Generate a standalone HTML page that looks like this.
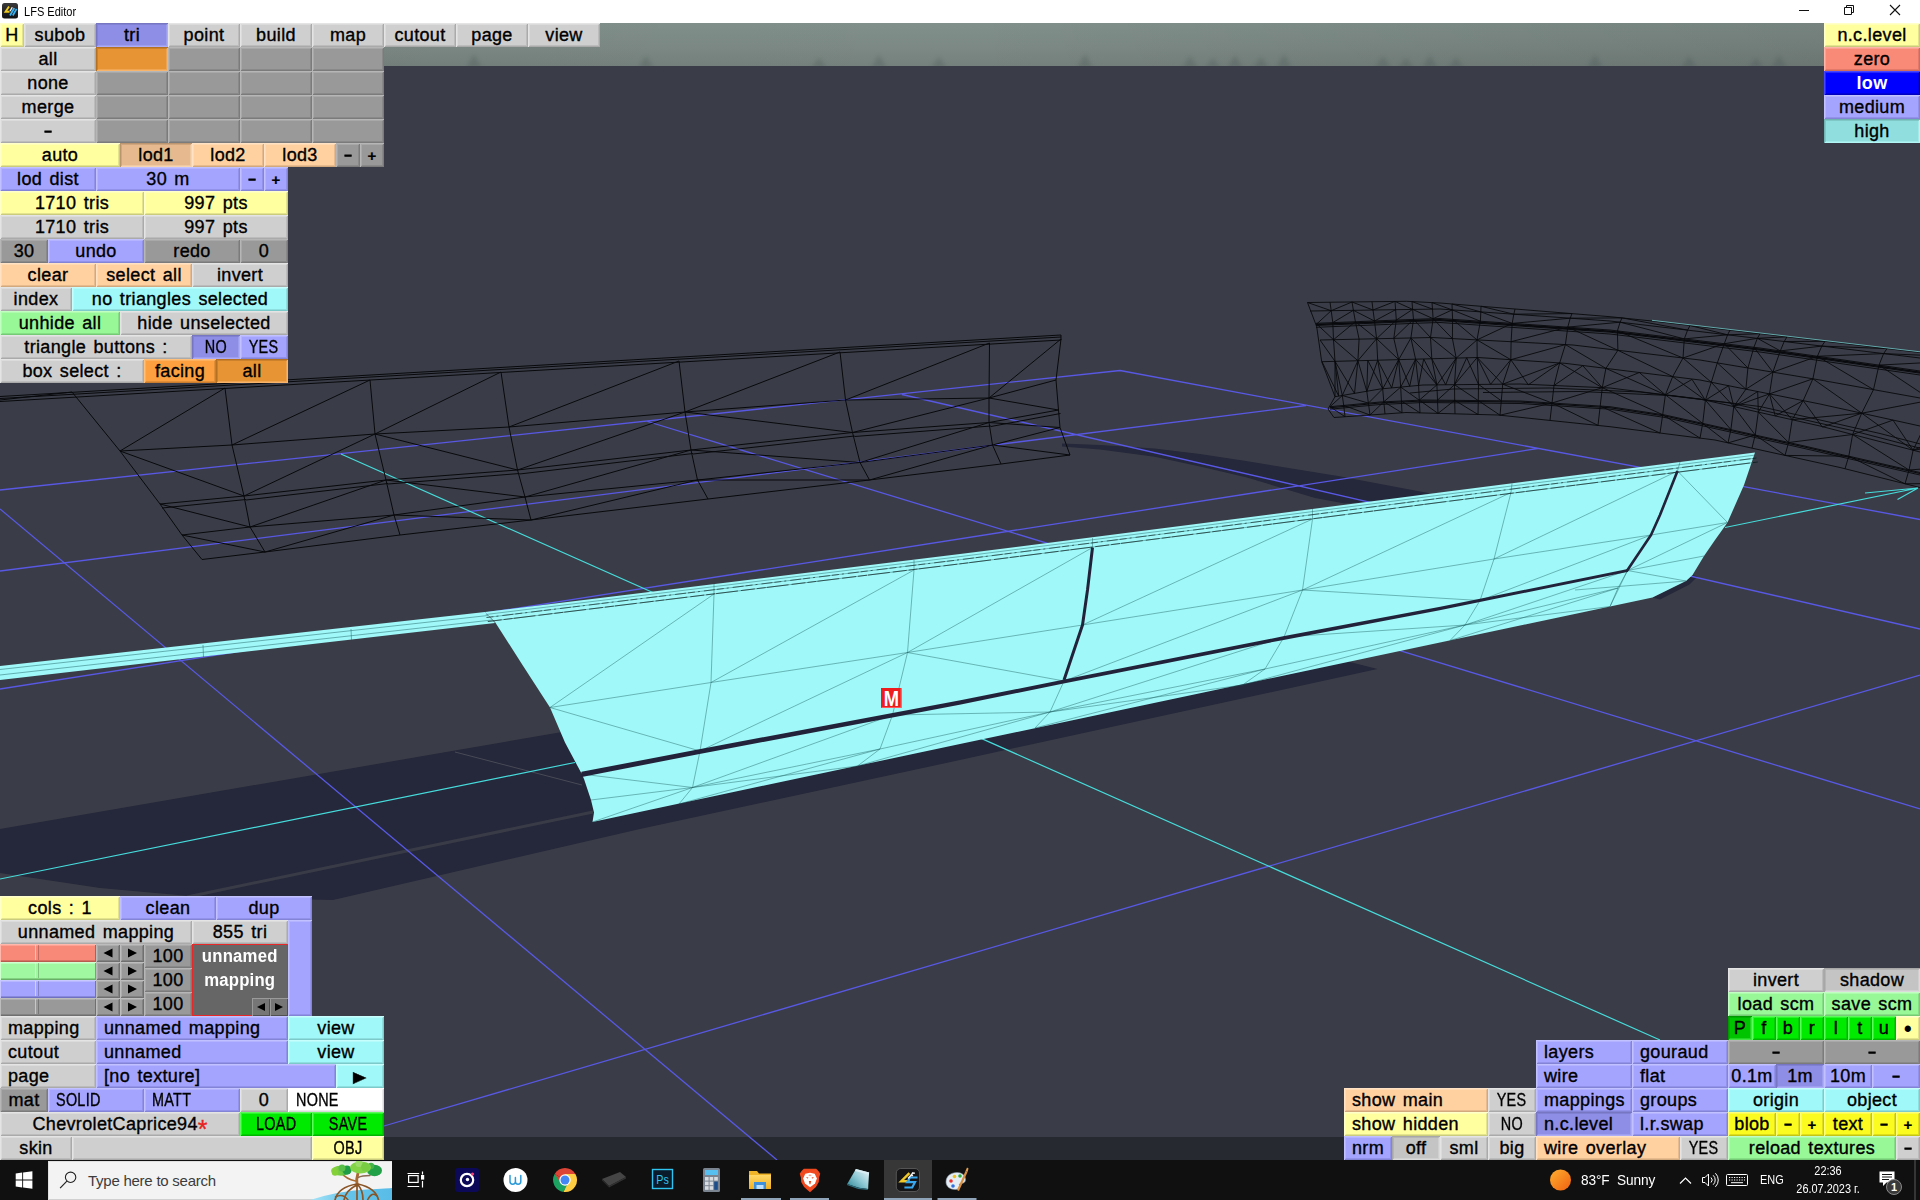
<!DOCTYPE html>
<html><head><meta charset="utf-8"><title>LFS Editor</title>
<style>
html,body{margin:0;padding:0;background:#3a3d47;}
body{width:1920px;height:1200px;position:relative;overflow:hidden;font-family:"Liberation Sans",sans-serif;}
#scene{position:absolute;left:0;top:0;}
.b{position:absolute;height:24px;box-sizing:border-box;font-size:18px;line-height:24px;letter-spacing:.35px;word-spacing:2px;color:#000;text-align:center;white-space:nowrap;overflow:hidden;-webkit-text-stroke:.35px #000;}
.b span{display:inline-block;}
.b.l{text-align:left;padding-left:8px;}
.b.uc span{transform:scaleX(.8);}
.b.l.uc span{transform-origin:0 50%;}
.b.wb{color:#fff;font-weight:bold;-webkit-text-stroke:0;}
.b.chev i{color:#e82020;font-style:normal;-webkit-text-stroke:.35px #e82020;font-size:25px;line-height:10px;display:inline-block;vertical-align:-8px;letter-spacing:0}
.b.arr span{font-size:15px;transform:scaleX(1.15);}
.b.dot span{font-size:23px;position:relative;top:.5px;-webkit-text-stroke:0}
.b.dash span{transform:scaleX(.66);-webkit-text-stroke:.9px #000;position:relative;top:-1px}
.b.plus span{font-size:15px;font-weight:bold;-webkit-text-stroke:.2px #000;position:relative;top:-.5px}
.cY{background:#ffffa0;box-shadow:inset 1px 1px 0 #ffffca,inset -1px -1px 0 #cccc7d,inset 2px 2px 0 #ffffca88,inset -2px -2px 0 #cccc7d88}
.cG{background:#cfcfcf;box-shadow:inset 1px 1px 0 #e4e4e4,inset -1px -1px 0 #aaaaaa,inset 2px 2px 0 #e4e4e488,inset -2px -2px 0 #aaaaaa88}
.cLS{background:#8e8ee6;box-shadow:inset 1px 1px 0 #7676c3,inset -1px -1px 0 #acacf8,inset 2px 2px 0 #7676c388,inset -2px -2px 0 #acacf888}
.cOS{background:#e69434;box-shadow:inset 1px 1px 0 #b47124,inset -1px -1px 0 #f8b46b,inset 2px 2px 0 #b4712488,inset -2px -2px 0 #f8b46b88}
.cD{background:#999999;box-shadow:inset 1px 1px 0 #b6b6b6,inset -1px -1px 0 #7b7b7b,inset 2px 2px 0 #b6b6b688,inset -2px -2px 0 #7b7b7b88}
.cPS{background:#e6ba8e;box-shadow:inset 1px 1px 0 #bb9570,inset -1px -1px 0 #f8d5b2,inset 2px 2px 0 #bb957088,inset -2px -2px 0 #f8d5b288}
.cP{background:#ffd0a0;box-shadow:inset 1px 1px 0 #ffe2c3,inset -1px -1px 0 #d2a87d,inset 2px 2px 0 #ffe2c388,inset -2px -2px 0 #d2a87d88}
.cL{background:#a4a4ff;box-shadow:inset 1px 1px 0 #c1c1ff,inset -1px -1px 0 #8484d7,inset 2px 2px 0 #c1c1ff88,inset -2px -2px 0 #8484d788}
.cC{background:#a0f8f8;box-shadow:inset 1px 1px 0 #c6fefe,inset -1px -1px 0 #7dcaca,inset 2px 2px 0 #c6fefe88,inset -2px -2px 0 #7dcaca88}
.cGR{background:#98f898;box-shadow:inset 1px 1px 0 #c2fec2,inset -1px -1px 0 #75ca75,inset 2px 2px 0 #c2fec288,inset -2px -2px 0 #75ca7588}
.cO{background:#fca040;box-shadow:inset 1px 1px 0 #fec07a,inset -1px -1px 0 #cb7d2f,inset 2px 2px 0 #fec07a88,inset -2px -2px 0 #cb7d2f88}
.cR{background:#f98a78;box-shadow:inset 1px 1px 0 #feb5a8,inset -1px -1px 0 #d06c5b,inset 2px 2px 0 #feb5a888,inset -2px -2px 0 #d06c5b88}
.cB{background:#0000ff;box-shadow:inset 1px 1px 0 #4848ff,inset -1px -1px 0 #0000c0,inset 2px 2px 0 #4848ff88,inset -2px -2px 0 #0000c088}
.cCS{background:#90dede;box-shadow:inset 1px 1px 0 #70b3b3,inset -1px -1px 0 #b3f6f6,inset 2px 2px 0 #70b3b388,inset -2px -2px 0 #b3f6f688}
.cW{background:#ffffff;box-shadow:inset 1px 1px 0 #ffffff,inset -1px -1px 0 #d7d7d7,inset 2px 2px 0 #ffffff88,inset -2px -2px 0 #d7d7d788}
.cBG{background:#00ea00;box-shadow:inset 1px 1px 0 #5afb5a,inset -1px -1px 0 #00b500,inset 2px 2px 0 #5afb5a88,inset -2px -2px 0 #00b50088}
.cG2{background:#c4c4c4;box-shadow:inset 1px 1px 0 #a7a7a7,inset -1px -1px 0 #dbdbdb,inset 2px 2px 0 #a7a7a788,inset -2px -2px 0 #dbdbdb88}
.cBGS{background:#00c400;box-shadow:inset 1px 1px 0 #009a00,inset -1px -1px 0 #45e445,inset 2px 2px 0 #009a0088,inset -2px -2px 0 #45e44588}
.cYB{background:#fbfb20;box-shadow:inset 1px 1px 0 #fefe7a,inset -1px -1px 0 #c5c514,inset 2px 2px 0 #fefe7a88,inset -2px -2px 0 #c5c51488}

#tb{position:absolute;left:0;top:0;width:1920px;height:23px;background:#fff;}
#tb .ttl{position:absolute;left:23.5px;top:4.5px;font-size:12px;line-height:14px;color:#000;transform:scaleX(.92);transform-origin:0 50%;}
.sl{position:absolute;left:0;width:96px;height:18px;box-sizing:border-box;}
.sl i{position:absolute;left:35px;top:1px;width:4px;height:15px;box-sizing:border-box;border-left:1px solid rgba(255,255,255,.45);border-right:1px solid rgba(0,0,0,.22);}
.ab{position:absolute;width:24px;height:18px;box-sizing:border-box;background:#999;box-shadow:inset 1px 1px 0 #bdbdbd,inset -1px -1px 0 #6f6f6f,inset 2px 2px 0 #bdbdbd88,inset -2px -2px 0 #6f6f6f88;}
.ab svg{position:absolute;left:0;top:0}
#mbox{position:absolute;left:192px;top:944px;width:96px;height:72px;box-sizing:border-box;background:#666;border:1.5px solid #e82828;color:#fff;font-weight:bold;font-size:18px;line-height:23.5px;text-align:center;letter-spacing:.2px;}
#mbox span{display:inline-block;transform:scaleX(.93);}
.sb{position:absolute;top:998px;width:18px;height:18px;box-sizing:border-box;background:#767676;box-shadow:inset 1px 1px 0 #9a9a9a,inset -1px -1px 0 #505050;}
#task{position:absolute;left:0;top:1160px;width:1920px;height:40px;background:#101010;color:#fff;}
#task svg{position:absolute;left:0;top:0}
#srch{position:absolute;left:48px;top:1px;width:344px;height:39px;background:#f3f3f3;overflow:hidden;box-sizing:border-box;box-shadow:inset 1px 1px 0 #e0e0e0,inset 0 -1px 0 #d0d0d0;}
#srch span{position:absolute;left:40px;top:11px;font-size:15px;line-height:18px;color:#3c3c3c;letter-spacing:-.25px}
.tt{position:absolute;font-size:12px;line-height:14px;color:#fff;white-space:nowrap;text-align:center;transform:scaleX(.91)}
.tt.lft{transform-origin:0 50%}

</style></head><body>
<svg id="scene" width="1920" height="1200" viewBox="0 0 1920 1200">
<defs><linearGradient id="sky" x1="0" y1="0" x2="0" y2="1"><stop offset="0" stop-color="#81908b"/><stop offset="0.55" stop-color="#7c8984"/><stop offset="1" stop-color="#75817d"/></linearGradient><linearGradient id="skyh" x1="0" y1="0" x2="1" y2="0"><stop offset="0" stop-color="#000" stop-opacity="0.02"/><stop offset="0.4" stop-color="#000" stop-opacity="0"/><stop offset="1" stop-color="#000" stop-opacity="0.09"/></linearGradient><filter id="bl" x="-20%" y="-50%" width="140%" height="200%"><feGaussianBlur stdDeviation="2.2"/></filter></defs>
<rect width="1920" height="1200" fill="#3a3d47"/>
<rect x="0" y="23" width="1920" height="43" fill="url(#sky)"/>
<rect x="384" y="23" width="1440" height="43" fill="url(#skyh)"/>
<clipPath id="csky"><rect x="384" y="23" width="1440" height="43"/></clipPath><g clip-path="url(#csky)"><path d="M466 68L474 54L482 68zM638 68L646 56L654 68zM811 68L819 58L827 68zM871 68L879 55L887 68zM931 68L939 57L947 68zM1077 68L1085 54L1093 68zM1182 68L1190 56L1198 68zM1205 68L1213 58L1221 68zM1227 68L1235 55L1243 68zM1253 68L1261 57L1269 68zM1276 68L1284 54L1292 68zM1375 68L1383 56L1391 68zM1398 68L1406 58L1414 68zM1422 68L1430 55L1438 68zM1448 68L1456 57L1464 68zM1587 68L1595 54L1603 68zM1681 68L1689 56L1697 68zM1748 68L1756 58L1764 68zM1771 68L1779 55L1787 68z" fill="#4a5654" opacity=".32" filter="url(#bl)"/></g>
<rect x="0" y="1137" width="1920" height="23" fill="#272930"/>
<polygon points="0.0,829.0 562.0,732.0 700.0,700.0 1300.0,600.0 1350.0,662.0 1377.5,669.0 960.0,760.0 640.0,829.0 333.0,900.0 200.0,897.0 100.0,888.0 0.0,873.0" fill="#25273a"/>
<path d="M187.0 897.0L593.0 812.0" stroke="#393c46" stroke-width="3"/>
<path d="M455.0 752.0L582.0 785.0" stroke="#484b56" stroke-width="1"/>
<polygon points="1062.0,443.5 1100.0,445.0 1154.6,448.6 1200.0,454.0 1246.0,461.0 1338.0,476.0 1429.5,493.3 1400.0,500.0 1344.8,503.6 1315.0,498.0 1246.0,477.3 1200.0,466.5 1154.6,456.7 1100.0,449.5 1062.0,446.5" fill="#25273a"/>
<polygon points="1652.5,597.5 1686.0,581.0 1692.5,575.0 1697.5,576.5 1689.5,584.5 1660.0,599.5" fill="#25273a"/>
<path d="M0.0 490.0L1120.0 370.5M1120.0 370.5L1920.0 519.5M0.0 571.0L1306.0 405.5M0.0 689.0L1537.5 448.5M384.0 1126.0L1920.0 675.0M0.0 509.0L777.0 1160.0M647.5 421.5L1920.0 809.0M902.0 394.5L1920.0 629.0" stroke="#5858e4" stroke-width="1.3" fill="none"/>
<path d="M341.0 454.0L1660.0 1040.0M0.0 879.0L575.0 762.5M1725.0 527.5L1918.0 488.0M1865.0 493.0L1918.0 488.0M1897.5 499.5L1918.0 488.0" stroke="#46dcdc" stroke-width="1.2" fill="none"/>
<path d="M0.0 396.5L1061.0 335.0M0.0 398.5L1061.0 337.0M0.0 401.5L1061.0 340.0M1061.0 335.0L1061.0 340.0M72.0 392.0L120.0 451.0L160.0 504.0L182.0 535.0L202.0 559.5M225.0 388.0L232.0 445.0L244.0 496.0L250.0 527.0L265.0 552.0M370.0 380.0L375.0 434.0L386.0 480.0L394.0 515.0L400.0 535.0M501.0 372.0L509.0 427.0L517.5 470.0L525.0 497.0L531.0 520.0M679.0 361.0L685.0 412.0L691.0 450.0L697.5 480.0L708.0 499.0M840.0 352.0L845.5 400.0L852.5 432.5L860.0 462.5L869.5 480.0M989.5 343.0L989.0 398.0L989.0 422.5L992.5 445.0L1001.0 464.0M1061.0 339.0L1056.0 380.0L1058.5 410.0L1060.0 427.5L1070.0 455.0M120.0 451.0L232.0 445.0M160.0 504.0L244.0 496.0M182.0 535.0L250.0 527.0M202.0 559.5L265.0 552.0M162.0 508.0L246.0 499.5M120.0 451.0L225.0 388.0M120.0 451.0L244.0 496.0M160.0 504.0L250.0 527.0M182.0 535.0L265.0 552.0M232.0 445.0L375.0 434.0M244.0 496.0L386.0 480.0M250.0 527.0L394.0 515.0M265.0 552.0L400.0 535.0M246.0 500.0L388.0 483.5M232.0 445.0L370.0 380.0M244.0 496.0L375.0 434.0M250.0 527.0L386.0 480.0M265.0 552.0L394.0 515.0M375.0 434.0L509.0 427.0M386.0 480.0L517.5 470.0M394.0 515.0L525.0 497.0M400.0 535.0L531.0 520.0M388.0 484.0L519.5 473.5M375.0 434.0L501.0 372.0M375.0 434.0L517.5 470.0M386.0 480.0L525.0 497.0M394.0 515.0L531.0 520.0M509.0 427.0L685.0 412.0M517.5 470.0L691.0 450.0M525.0 497.0L697.5 480.0M531.0 520.0L708.0 499.0M519.5 474.0L693.0 453.5M509.0 427.0L679.0 361.0M517.5 470.0L685.0 412.0M525.0 497.0L691.0 450.0M531.0 520.0L697.5 480.0M685.0 412.0L845.5 400.0M691.0 450.0L852.5 432.5M697.5 480.0L860.0 462.5M708.0 499.0L869.5 480.0M693.0 454.0L854.5 436.0M685.0 412.0L840.0 352.0M685.0 412.0L852.5 432.5M691.0 450.0L860.0 462.5M697.5 480.0L869.5 480.0M845.5 400.0L989.0 398.0M852.5 432.5L989.0 422.5M860.0 462.5L992.5 445.0M869.5 480.0L1001.0 464.0M854.5 436.5L991.0 426.0M845.5 400.0L989.5 343.0M852.5 432.5L989.0 398.0M860.0 462.5L989.0 422.5M869.5 480.0L992.5 445.0M989.0 398.0L1056.0 380.0M989.0 422.5L1058.5 410.0M992.5 445.0L1060.0 427.5M1001.0 464.0L1070.0 455.0M991.0 426.5L1060.5 413.5M989.0 398.0L1061.0 339.0M989.0 398.0L1058.5 410.0M989.0 422.5L1060.0 427.5M992.5 445.0L1070.0 455.0M0.0 400.0L72.0 392.0" stroke="#08090c" stroke-width="1" fill="none" stroke-linejoin="round"/>
<clipPath id="cw2"><rect x="1300" y="290" width="620" height="230"/></clipPath>
<path clip-path="url(#cw2)" d="M1307.5 302.5L1406.7 301.3L1440.0 303.0L1515.0 309.0L1610.0 316.7L1652.0 321.0L1780.0 336.0L1920.0 352.5L2000.0 363.0M1310.0 311.0L1440.0 309.0L1610.0 321.0L1780.0 341.0L1920.0 358.0L2000.0 369.0M1316.0 323.3L1423.0 319.0L1440.0 318.5L1610.0 330.0L1760.0 348.0L1920.0 371.0L2000.0 384.0M1320.0 340.0L1432.0 337.5L1573.0 345.0L1700.0 360.0L1820.0 380.0L1920.0 398.0L2000.0 412.0M1322.0 361.7L1478.0 357.5L1565.0 363.3L1700.0 380.0L1820.0 404.0L1920.0 426.0L2000.0 444.0M1335.0 396.7L1380.0 389.0L1423.0 385.0L1520.0 384.0L1610.0 388.0L1700.0 399.0L1820.0 426.0L1920.0 452.0L2000.0 474.0M1330.0 406.7L1380.0 402.0L1423.0 400.0L1520.0 401.0L1610.0 406.7L1665.0 415.0L1800.0 445.0L1920.0 472.5L2000.0 492.0M1334.0 417.5L1406.0 412.5L1498.0 415.0L1610.0 426.7L1715.0 440.0L1840.0 467.5L1920.0 487.5L2000.0 508.0M1316.0 325.5L1423.0 321.2L1440.0 320.7L1610.0 332.2L1760.0 350.2L1920.0 373.2L2000.0 386.2M1316.0 327.3L1423.0 323.0L1440.0 322.5L1610.0 334.0L1760.0 352.0L1920.0 375.0L2000.0 388.0M1330.0 409.2L1380.0 404.5L1423.0 402.5L1520.0 403.5L1610.0 409.2L1665.0 417.5L1800.0 447.5L1920.0 475.0L2000.0 494.5M1410.0 393.0L1453.0 389.0L1550.0 388.0L1640.0 392.0L1730.0 403.0L1850.0 430.0L1950.0 456.0L2030.0 478.0M1483.0 392.5L1580.0 391.5L1670.0 395.5L1760.0 406.5L1880.0 433.5L1980.0 459.5L2060.0 481.5M1307.5 302.5L1316.7 326.7L1321.7 361.7L1335.0 396.7L1328.0 409.0L1334.0 417.5M1330.0 302.2L1331.2 310.7L1332.8 322.6L1333.5 339.7L1335.0 361.3L1342.3 395.5L1343.7 405.4L1345.0 416.7M1307.5 302.5L1331.2 310.7M1316.7 324.0L1331.2 310.7M1316.7 324.0L1333.5 339.7M1320.0 340.0L1335.0 361.3M1335.0 396.7L1335.0 361.3M1330.0 406.7L1342.3 395.5M1330.0 406.7L1345.0 416.7M1338.7 396.1L1322.0 361.7M1338.7 396.1L1335.0 361.3M1352.0 302.0L1353.4 310.3L1355.4 321.7L1359.1 339.1L1357.9 360.7L1366.8 391.3L1368.4 403.1L1370.0 415.0M1331.2 310.7L1352.0 302.0M1332.8 322.6L1353.4 310.3M1333.5 339.7L1355.4 321.7M1333.5 339.7L1357.9 360.7M1342.3 395.5L1357.9 360.7M1342.3 395.5L1368.4 403.1M1343.7 405.4L1370.0 415.0M1354.5 393.4L1335.0 361.3M1354.5 393.4L1357.9 360.7M1372.0 301.7L1373.0 310.0L1374.5 321.0L1376.6 338.7L1377.7 360.2L1382.7 388.8L1383.8 401.8L1385.0 414.0M1352.0 302.0L1373.0 310.0M1353.4 310.3L1374.5 321.0M1355.4 321.7L1376.6 338.7M1357.9 360.7L1376.6 338.7M1366.8 391.3L1377.7 360.2M1368.4 403.1L1382.7 388.8M1370.0 415.0L1383.8 401.8M1367.8 360.5L1366.8 391.3M1367.8 360.5L1382.7 388.8M1395.0 301.4L1395.6 309.7L1396.3 320.1L1393.8 338.4L1398.7 359.6L1400.7 387.1L1401.4 401.0L1402.0 412.8M1373.0 310.0L1395.0 301.4M1374.5 321.0L1395.6 309.7M1376.6 338.7L1396.3 320.1M1376.6 338.7L1398.7 359.6M1382.7 388.8L1398.7 359.6M1383.8 401.8L1400.7 387.1M1383.8 401.8L1402.0 412.8M1391.7 387.9L1377.7 360.2M1391.7 387.9L1398.7 359.6M1412.0 301.6L1412.6 309.4L1413.5 319.4L1410.9 338.0L1415.6 359.2L1418.6 385.4L1419.3 400.2L1420.0 412.9M1395.0 301.4L1412.6 309.4M1396.3 320.1L1412.6 309.4M1393.8 338.4L1413.5 319.4M1398.7 359.6L1410.9 338.0M1400.7 387.1L1415.6 359.2M1400.7 387.1L1419.3 400.2M1401.4 401.0L1420.0 412.9M1409.7 386.2L1398.7 359.6M1409.7 386.2L1415.6 359.2M1432.0 302.6L1432.5 309.1L1433.1 318.7L1430.5 337.5L1431.8 358.7L1436.9 384.9L1437.5 400.1L1438.0 413.4M1412.0 301.6L1432.5 309.1M1412.6 309.4L1433.1 318.7M1413.5 319.4L1430.5 337.5M1410.9 338.0L1431.8 358.7M1415.6 359.2L1436.9 384.9M1419.3 400.2L1436.9 384.9M1419.3 400.2L1438.0 413.4M1423.7 359.0L1418.6 385.4M1423.7 359.0L1436.9 384.9M1452.0 304.0L1452.2 309.9L1452.6 319.4L1452.4 338.6L1456.2 358.1L1454.5 384.7L1454.7 400.3L1455.0 413.8M1432.0 302.6L1452.2 309.9M1433.1 318.7L1452.2 309.9M1433.1 318.7L1452.4 338.6M1430.5 337.5L1456.2 358.1M1436.9 384.9L1456.2 358.1M1437.5 400.1L1454.5 384.7M1438.0 413.4L1454.7 400.3M1445.7 384.8L1431.8 358.7M1445.7 384.8L1456.2 358.1M1481.0 306.3L1480.8 311.9L1480.4 321.2L1477.0 339.9L1477.2 357.5L1478.5 384.4L1478.3 400.6L1478.0 414.5M1452.0 304.0L1480.8 311.9M1452.2 309.9L1480.4 321.2M1452.6 319.4L1477.0 339.9M1456.2 358.1L1477.0 339.9M1454.5 384.7L1477.2 357.5M1454.5 384.7L1478.3 400.6M1454.7 400.3L1478.0 414.5M1466.7 357.8L1454.5 384.7M1466.7 357.8L1478.5 384.4M1515.0 309.0L1513.8 314.2L1512.2 323.4L1511.1 341.7L1510.8 359.7L1502.7 384.2L1501.3 400.8L1500.0 415.2M1481.0 306.3L1513.8 314.2M1480.8 311.9L1512.2 323.4M1477.0 339.9L1512.2 323.4M1477.0 339.9L1510.8 359.7M1477.2 357.5L1502.7 384.2M1478.5 384.4L1501.3 400.8M1478.3 400.6L1500.0 415.2M1490.6 384.3L1477.2 357.5M1490.6 384.3L1510.8 359.7M1572.0 313.6L1570.2 318.2L1567.8 327.1L1565.4 344.6L1559.7 362.9L1554.0 385.5L1552.0 403.0L1550.0 420.4M1513.8 314.2L1572.0 313.6M1512.2 323.4L1570.2 318.2M1511.1 341.7L1567.8 327.1M1510.8 359.7L1565.4 344.6M1502.7 384.2L1559.7 362.9M1502.7 384.2L1552.0 403.0M1500.0 415.2L1552.0 403.0M1528.3 384.8L1510.8 359.7M1528.3 384.8L1559.7 362.9M1622.0 317.9L1620.1 322.2L1617.4 330.9L1617.9 350.3L1605.9 368.4L1602.3 387.7L1600.2 406.1L1598.0 425.4M1570.2 318.2L1622.0 317.9M1567.8 327.1L1620.1 322.2M1567.8 327.1L1617.9 350.3M1565.4 344.6L1605.9 368.4M1559.7 362.9L1602.3 387.7M1552.0 403.0L1602.3 387.7M1552.0 403.0L1598.0 425.4M1582.8 365.7L1554.0 385.5M1582.8 365.7L1602.3 387.7M1690.0 325.5L1687.6 330.1L1684.3 338.9L1683.0 358.0L1672.7 376.6L1665.4 394.8L1662.7 414.7L1660.0 433.0M1622.0 317.9L1687.6 330.1M1620.1 322.2L1684.3 338.9M1617.4 330.9L1683.0 358.0M1617.9 350.3L1672.7 376.6M1605.9 368.4L1665.4 394.8M1602.3 387.7L1662.7 414.7M1600.2 406.1L1660.0 433.0M1639.3 372.5L1602.3 387.7M1639.3 372.5L1665.4 394.8M1730.0 330.1L1727.6 334.8L1724.3 343.7L1717.3 362.9L1711.3 382.3L1705.4 400.2L1702.7 423.4L1700.0 438.1M1690.0 325.5L1727.6 334.8M1684.3 338.9L1727.6 334.8M1683.0 358.0L1724.3 343.7M1683.0 358.0L1711.3 382.3M1672.7 376.6L1705.4 400.2M1665.4 394.8L1702.7 423.4M1662.7 414.7L1700.0 438.1M1692.0 379.4L1665.4 394.8M1692.0 379.4L1705.4 400.2M1760.0 333.7L1757.4 338.3L1753.9 347.3L1747.9 368.0L1745.9 389.2L1733.8 406.6L1730.9 429.6L1728.0 442.9M1727.6 334.8L1760.0 333.7M1724.3 343.7L1757.4 338.3M1724.3 343.7L1747.9 368.0M1717.3 362.9L1745.9 389.2M1711.3 382.3L1733.8 406.6M1705.4 400.2L1730.9 429.6M1702.7 423.4L1728.0 442.9M1728.6 385.7L1705.4 400.2M1728.6 385.7L1733.8 406.6M1787.0 336.8L1784.2 341.5L1780.3 350.9L1772.9 372.1L1769.5 393.9L1758.3 412.1L1755.2 435.0L1752.0 448.1M1757.4 338.3L1787.0 336.8M1757.4 338.3L1780.3 350.9M1753.9 347.3L1772.9 372.1M1745.9 389.2L1772.9 372.1M1733.8 406.6L1769.5 393.9M1733.8 406.6L1755.2 435.0M1728.0 442.9L1755.2 435.0M1757.7 391.5L1733.8 406.6M1757.7 391.5L1758.3 412.1M1825.0 341.3L1821.8 346.1L1817.4 356.3L1812.9 378.8L1803.2 400.6L1792.2 419.7L1788.6 442.5L1785.0 455.4M1784.2 341.5L1825.0 341.3M1780.3 350.9L1821.8 346.1M1772.9 372.1L1817.4 356.3M1769.5 393.9L1812.9 378.8M1769.5 393.9L1792.2 419.7M1758.3 412.1L1788.6 442.5M1755.2 435.0L1785.0 455.4M1775.2 415.9L1769.5 393.9M1775.2 415.9L1803.2 400.6M1887.0 348.6L1883.6 353.6L1879.0 365.1L1873.5 389.6L1861.7 413.2L1852.6 434.5L1848.8 456.2L1845.0 468.8M1821.8 346.1L1887.0 348.6M1817.4 356.3L1883.6 353.6M1817.4 356.3L1873.5 389.6M1812.9 378.8L1861.7 413.2M1792.2 419.7L1861.7 413.2M1788.6 442.5L1852.6 434.5M1785.0 455.4L1848.8 456.2M1822.4 427.1L1803.2 400.6M1822.4 427.1L1861.7 413.2M1950.0 356.4L1946.4 361.6L1941.5 374.5L1931.6 400.0L1924.2 427.0L1913.1 450.2L1909.0 470.0L1905.0 483.8M1883.6 353.6L1950.0 356.4M1879.0 365.1L1946.4 361.6M1879.0 365.1L1931.6 400.0M1861.7 413.2L1931.6 400.0M1861.7 413.2L1913.1 450.2M1852.6 434.5L1909.0 470.0M1848.8 456.2L1905.0 483.8M1893.0 420.1L1852.6 434.5M1893.0 420.1L1913.1 450.2M2010.0 364.3L2006.0 369.8L2000.5 384.1L1994.9 411.1L1983.4 440.3L1969.0 465.5L1964.5 483.3L1960.0 497.8M1950.0 356.4L2006.0 369.8M1941.5 374.5L2006.0 369.8M1931.6 400.0L2000.5 384.1M1931.6 400.0L1983.4 440.3M1913.1 450.2L1983.4 440.3M1909.0 470.0L1969.0 465.5M1905.0 483.8L1964.5 483.3M1953.8 433.6L1913.1 450.2M1953.8 433.6L1969.0 465.5" stroke="#08090c" stroke-width=".9" fill="none" stroke-linejoin="round"/>
<path clip-path="url(#cw2)" d="M1316.0 324.5L1423.0 320.2L1440.0 319.7L1610.0 331.2L1760.0 349.2L1920.0 372.2L2000.0 385.2" stroke="#08090c" stroke-width="1.6" fill="none"/>
<path clip-path="url(#cw2)" d="M1330.0 407.7L1380.0 403.0L1423.0 401.0L1520.0 402.0L1610.0 407.7L1665.0 416.0L1800.0 446.0L1920.0 473.5L2000.0 493.0" stroke="#08090c" stroke-width="1.1" fill="none"/>
<path d="M1652.0 320.3L1780.0 335.3L1920.0 351.8" stroke="#7adcdc" stroke-width="1" fill="none" opacity=".7"/>
<polygon points="0.0,666.0 485.0,612.0 495.0,623.0 0.0,680.0" fill="#a0f8f8"/>
<path d="M0.0 669.5L488.0 615.5M0.0 675.0L492.0 620.0M203.0 645.0L203.5 657.0M351.0 629.0L351.5 640.0" stroke="#1c5c60" stroke-width=".6" fill="none" opacity=".8"/>
<polygon points="485.0,612.0 960.0,554.0 1200.0,523.5 1440.0,492.5 1755.0,452.5 1744.0,485.0 1727.5,522.5 1715.0,540.0 1704.0,556.0 1692.5,575.0 1686.0,581.0 1652.5,597.5 1440.0,642.5 960.0,744.0 592.5,822.0 594.0,812.5 591.0,800.0 584.0,779.0 581.0,772.5 565.0,742.5 550.0,707.5 522.5,665.0 495.0,622.0" fill="#a0f8f8"/>
<path d="M485.8 614.5L960.8 556.5L1200.8 526.0L1440.8 495.0L1755.8 455.0M486.6 617.5L961.6 559.5L1201.7 529.0L1441.7 498.0L1756.7 458.0M487.9 621.5L962.9 563.5L1202.8 533.0L1442.8 502.0L1757.8 462.0M714.0 584.0L714.0 594.0L711.0 682.5L700.0 751.0L692.5 787.5L679.0 804.0M914.0 560.0L914.0 570.0L907.5 652.5L892.5 715.0L880.0 749.0L857.5 766.0M1092.5 538.0L1092.5 547.5L1082.5 625.0L1064.0 681.0L1050.0 712.0L1035.0 728.0M1312.5 509.0L1312.5 519.0L1302.5 590.0L1284.0 637.0L1265.0 669.0L1242.5 685.0M1512.0 483.5L1511.0 492.5L1494.0 559.0L1480.0 600.5L1465.0 625.0L1450.0 640.5M1680.0 462.0L1677.5 471.0L1651.0 535.0L1627.5 570.5L1618.0 588.0L1610.0 606.5M1677.5 471.0L1727.5 522.5M1651.0 535.0L1727.5 522.5M1627.5 570.5L1727.5 522.5M1627.5 570.5L1704.0 556.0M1627.5 570.5L1686.0 581.0M1610.0 606.5L1627.5 570.5M1575.0 590.0L1686.0 581.0M550.0 707.5L711.0 682.5M591.0 800.0L692.5 787.5M550.0 707.5L714.0 594.0M550.0 707.5L700.0 751.0M592.5 822.0L692.5 787.5M581.0 774.0L692.5 787.5M711.0 682.5L907.5 652.5M692.5 787.5L880.0 749.0M711.0 682.5L914.0 570.0M700.0 751.0L907.5 652.5M692.5 787.5L892.5 715.0M679.0 804.0L880.0 749.0M692.5 787.5L857.5 766.0M907.5 652.5L1082.5 625.0M880.0 749.0L1050.0 712.0M907.5 652.5L1092.5 547.5M907.5 652.5L1064.0 681.0M857.5 766.0L1050.0 712.0M892.5 715.0L1050.0 712.0M1082.5 625.0L1302.5 590.0M1050.0 712.0L1265.0 669.0M1082.5 625.0L1312.5 519.0M1064.0 681.0L1302.5 590.0M1050.0 712.0L1284.0 637.0M1035.0 728.0L1265.0 669.0M1050.0 712.0L1242.5 685.0M1302.5 590.0L1494.0 559.0M1265.0 669.0L1465.0 625.0M1302.5 590.0L1511.0 492.5M1302.5 590.0L1480.0 600.5M1242.5 685.0L1465.0 625.0M1284.0 637.0L1465.0 625.0M1494.0 559.0L1651.0 535.0M1465.0 625.0L1618.0 588.0M1494.0 559.0L1677.5 471.0M1480.0 600.5L1651.0 535.0M1465.0 625.0L1627.5 570.5M1450.0 640.5L1618.0 588.0M1465.0 625.0L1610.0 606.5" stroke="#1c5c60" stroke-width=".7" fill="none" opacity=".62"/>
<path d="M486.5 617.5L961.5 559.5L1201.5 529.0L1441.5 498.0L1756.5 458.0" stroke="#000" stroke-width=".9" fill="none" stroke-dasharray="7 3 2 4 11 2" opacity=".55"/>
<path d="M487.8 621.5L962.8 563.5L1202.8 533.0L1442.8 502.0L1757.8 462.0" stroke="#000" stroke-width=".9" fill="none" stroke-dasharray="14 2 9 1 22 3" opacity=".62"/>
<polygon points="581.5,771.8 700.5,749.0 960.4,700.3 1064.4,679.4 1284.4,636.1 1440.3,606.8 1627.8,569.0 1627.2,572.0 1439.7,610.2 1283.6,639.9 1063.6,683.6 959.6,704.7 699.5,754.0 580.5,777.2" fill="#22233a"/>
<path d="M1626.5 571.5L1651.0 535.0L1660.0 515.0L1677.5 471.0" stroke="#22233a" stroke-width="2.600" fill="none" stroke-linejoin="round"/>
<path d="M1092.5 547.5L1087.5 590.0L1082.5 625.0L1064.0 680.0" stroke="#22233a" stroke-width="3" fill="none" stroke-linejoin="round"/>
<rect x="881" y="688" width="20.500" height="20" fill="#ee1c1c"/><path d="M881.500 707.500H901V688.500" fill="none" stroke="#ff5858" stroke-width="1"/>
<text x="891.300" y="706" text-anchor="middle" font-family="Liberation Sans, sans-serif" font-weight="bold" font-size="21.500" fill="#fff" textLength="15.300" lengthAdjust="spacingAndGlyphs">M</text>
</svg>
<div id="tb">
<svg width="1920" height="23" viewBox="0 0 1920 23" style="position:absolute;left:0;top:0">
<defs><linearGradient id="ig" x1="0" y1="0" x2="0" y2="1"><stop offset="0" stop-color="#3a3a3c"/><stop offset="1" stop-color="#111113"/></linearGradient></defs>
<rect x="2" y="3" width="16" height="15.500" rx="2.500" fill="url(#ig)"/>
<path d="M9 6.500L5.500 11.800h4" fill="none" stroke="#f0cc20" stroke-width="1.900"/>
<path d="M14.300 8L10 15.500M16.600 8.800L12.800 15.500" fill="none" stroke="#38b4f4" stroke-width="1.700"/>
<path d="M12.300 7.200l-2.300 4" stroke="#f4f4f4" stroke-width="1.300"/>
<path d="M1799 10.5h10" stroke="#111" stroke-width="1"/>
<path d="M1844.5 7.5h7v7h-7zM1846.500 7.5v-2h7v7h-2" fill="none" stroke="#111" stroke-width="1"/>
<path d="M1890 5l10 10M1900 5l-10 10" stroke="#111" stroke-width="1.1"/>
</svg>
<span class="ttl">LFS Editor</span></div>
<div class="b cY" style="left:0px;top:23px;width:24px;"><span>H</span></div>
<div class="b cG" style="left:24px;top:23px;width:72px;"><span>subob</span></div>
<div class="b cLS" style="left:96px;top:23px;width:72px;"><span>tri</span></div>
<div class="b cG" style="left:168px;top:23px;width:72px;"><span>point</span></div>
<div class="b cG" style="left:240px;top:23px;width:72px;"><span>build</span></div>
<div class="b cG" style="left:312px;top:23px;width:72px;"><span>map</span></div>
<div class="b cG" style="left:384px;top:23px;width:72px;"><span>cutout</span></div>
<div class="b cG" style="left:456px;top:23px;width:72px;"><span>page</span></div>
<div class="b cG" style="left:528px;top:23px;width:72px;"><span>view</span></div>
<div class="b cG" style="left:0px;top:47px;width:96px;"><span>all</span></div>
<div class="b cOS" style="left:96px;top:47px;width:72px;"></div>
<div class="b cD" style="left:168px;top:47px;width:72px;"></div>
<div class="b cD" style="left:240px;top:47px;width:72px;"></div>
<div class="b cD" style="left:312px;top:47px;width:72px;"></div>
<div class="b cG" style="left:0px;top:71px;width:96px;"><span>none</span></div>
<div class="b cD" style="left:96px;top:71px;width:72px;"></div>
<div class="b cD" style="left:168px;top:71px;width:72px;"></div>
<div class="b cD" style="left:240px;top:71px;width:72px;"></div>
<div class="b cD" style="left:312px;top:71px;width:72px;"></div>
<div class="b cG" style="left:0px;top:95px;width:96px;"><span>merge</span></div>
<div class="b cD" style="left:96px;top:95px;width:72px;"></div>
<div class="b cD" style="left:168px;top:95px;width:72px;"></div>
<div class="b cD" style="left:240px;top:95px;width:72px;"></div>
<div class="b cD" style="left:312px;top:95px;width:72px;"></div>
<div class="b cG dash" style="left:0px;top:119px;width:96px;"><span>–</span></div>
<div class="b cD" style="left:96px;top:119px;width:72px;"></div>
<div class="b cD" style="left:168px;top:119px;width:72px;"></div>
<div class="b cD" style="left:240px;top:119px;width:72px;"></div>
<div class="b cD" style="left:312px;top:119px;width:72px;"></div>
<div class="b cY" style="left:0px;top:143px;width:120px;"><span>auto</span></div>
<div class="b cPS" style="left:120px;top:143px;width:72px;"><span>lod1</span></div>
<div class="b cP" style="left:192px;top:143px;width:72px;"><span>lod2</span></div>
<div class="b cP" style="left:264px;top:143px;width:72px;"><span>lod3</span></div>
<div class="b cD dash" style="left:336px;top:143px;width:24px;"><span>–</span></div>
<div class="b cD plus" style="left:360px;top:143px;width:24px;"><span>+</span></div>
<div class="b cL" style="left:0px;top:167px;width:96px;"><span>lod dist</span></div>
<div class="b cL" style="left:96px;top:167px;width:144px;"><span>30 m</span></div>
<div class="b cL dash" style="left:240px;top:167px;width:24px;"><span>–</span></div>
<div class="b cL plus" style="left:264px;top:167px;width:24px;"><span>+</span></div>
<div class="b cY" style="left:0px;top:191px;width:144px;"><span>1710 tris</span></div>
<div class="b cY" style="left:144px;top:191px;width:144px;"><span>997 pts</span></div>
<div class="b cG" style="left:0px;top:215px;width:144px;"><span>1710 tris</span></div>
<div class="b cG" style="left:144px;top:215px;width:144px;"><span>997 pts</span></div>
<div class="b cD" style="left:0px;top:239px;width:48px;"><span>30</span></div>
<div class="b cL" style="left:48px;top:239px;width:96px;"><span>undo</span></div>
<div class="b cD" style="left:144px;top:239px;width:96px;"><span>redo</span></div>
<div class="b cD" style="left:240px;top:239px;width:48px;"><span>0</span></div>
<div class="b cP" style="left:0px;top:263px;width:96px;"><span>clear</span></div>
<div class="b cP" style="left:96px;top:263px;width:96px;"><span>select all</span></div>
<div class="b cG" style="left:192px;top:263px;width:96px;"><span>invert</span></div>
<div class="b cG" style="left:0px;top:287px;width:72px;"><span>index</span></div>
<div class="b cC" style="left:72px;top:287px;width:216px;"><span>no triangles selected</span></div>
<div class="b cGR" style="left:0px;top:311px;width:120px;"><span>unhide all</span></div>
<div class="b cG" style="left:120px;top:311px;width:168px;"><span>hide unselected</span></div>
<div class="b cG" style="left:0px;top:335px;width:192px;"><span>triangle buttons :</span></div>
<div class="b cLS uc" style="left:192px;top:335px;width:48px;"><span>NO</span></div>
<div class="b cL uc" style="left:240px;top:335px;width:48px;"><span>YES</span></div>
<div class="b cG" style="left:0px;top:359px;width:144px;"><span>box select :</span></div>
<div class="b cO" style="left:144px;top:359px;width:72px;"><span>facing</span></div>
<div class="b cOS" style="left:216px;top:359px;width:72px;"><span>all</span></div>
<div class="b cY" style="left:1824px;top:23px;width:96px;"><span>n.c.level</span></div>
<div class="b cR" style="left:1824px;top:47px;width:96px;"><span>zero</span></div>
<div class="b cB wb" style="left:1824px;top:71px;width:96px;"><span>low</span></div>
<div class="b cL" style="left:1824px;top:95px;width:96px;"><span>medium</span></div>
<div class="b cCS" style="left:1824px;top:119px;width:96px;"><span>high</span></div>
<div class="b cY" style="left:0px;top:896px;width:120px;"><span>cols : 1</span></div>
<div class="b cL" style="left:120px;top:896px;width:96px;"><span>clean</span></div>
<div class="b cL" style="left:216px;top:896px;width:96px;"><span>dup</span></div>
<div class="b cG" style="left:0px;top:920px;width:192px;"><span>unnamed mapping</span></div>
<div class="b cG" style="left:192px;top:920px;width:96px;"><span>855 tri</span></div>
<div class="b cL" style="left:288px;top:920px;width:24px;height:96px;"></div>
<div class="b cG l" style="left:0px;top:1016px;width:96px;"><span>mapping</span></div>
<div class="b cL l" style="left:96px;top:1016px;width:192px;"><span>unnamed mapping</span></div>
<div class="b cC" style="left:288px;top:1016px;width:96px;"><span>view</span></div>
<div class="b cG l" style="left:0px;top:1040px;width:96px;"><span>cutout</span></div>
<div class="b cL l" style="left:96px;top:1040px;width:192px;"><span>unnamed</span></div>
<div class="b cC" style="left:288px;top:1040px;width:96px;"><span>view</span></div>
<div class="b cG l" style="left:0px;top:1064px;width:96px;"><span>page</span></div>
<div class="b cL l" style="left:96px;top:1064px;width:240px;"><span>[no texture]</span></div>
<div class="b cC arr" style="left:336px;top:1064px;width:48px;"><span>▶</span></div>
<div class="b cD" style="left:0px;top:1088px;width:48px;"><span>mat</span></div>
<div class="b cL l uc" style="left:48px;top:1088px;width:96px;"><span>SOLID</span></div>
<div class="b cL l uc" style="left:144px;top:1088px;width:96px;"><span>MATT</span></div>
<div class="b cG" style="left:240px;top:1088px;width:48px;"><span>0</span></div>
<div class="b cW l uc" style="left:288px;top:1088px;width:96px;"><span>NONE</span></div>
<div class="b cG chev" style="left:0px;top:1112px;width:240px;"><span>ChevroletCaprice94<i>*</i></span></div>
<div class="b cBG uc" style="left:240px;top:1112px;width:72px;"><span>LOAD</span></div>
<div class="b cBG uc" style="left:312px;top:1112px;width:72px;"><span>SAVE</span></div>
<div class="b cG" style="left:0px;top:1136px;width:72px;"><span>skin</span></div>
<div class="b cG" style="left:72px;top:1136px;width:240px;"></div>
<div class="b cY uc" style="left:312px;top:1136px;width:72px;"><span>OBJ</span></div>
<div class="b cG" style="left:1728px;top:968px;width:96px;"><span>invert</span></div>
<div class="b cG2" style="left:1824px;top:968px;width:96px;"><span>shadow</span></div>
<div class="b cGR" style="left:1728px;top:992px;width:96px;"><span>load scm</span></div>
<div class="b cGR" style="left:1824px;top:992px;width:96px;"><span>save scm</span></div>
<div class="b cBGS" style="left:1728px;top:1016px;width:24px;"><span>P</span></div>
<div class="b cBG" style="left:1752px;top:1016px;width:24px;"><span>f</span></div>
<div class="b cBG" style="left:1776px;top:1016px;width:24px;"><span>b</span></div>
<div class="b cBG" style="left:1800px;top:1016px;width:24px;"><span>r</span></div>
<div class="b cBG" style="left:1824px;top:1016px;width:24px;"><span>l</span></div>
<div class="b cBG" style="left:1848px;top:1016px;width:24px;"><span>t</span></div>
<div class="b cBG" style="left:1872px;top:1016px;width:24px;"><span>u</span></div>
<div class="b cY dot" style="left:1896px;top:1016px;width:24px;"><span>•</span></div>
<div class="b cL l" style="left:1536px;top:1040px;width:96px;"><span>layers</span></div>
<div class="b cL l" style="left:1632px;top:1040px;width:96px;"><span>gouraud</span></div>
<div class="b cD dash" style="left:1728px;top:1040px;width:96px;"><span>–</span></div>
<div class="b cD dash" style="left:1824px;top:1040px;width:96px;"><span>–</span></div>
<div class="b cL l" style="left:1536px;top:1064px;width:96px;"><span>wire</span></div>
<div class="b cL l" style="left:1632px;top:1064px;width:96px;"><span>flat</span></div>
<div class="b cL" style="left:1728px;top:1064px;width:48px;"><span>0.1m</span></div>
<div class="b cLS" style="left:1776px;top:1064px;width:48px;"><span>1m</span></div>
<div class="b cL" style="left:1824px;top:1064px;width:48px;"><span>10m</span></div>
<div class="b cL dash" style="left:1872px;top:1064px;width:48px;"><span>–</span></div>
<div class="b cP l" style="left:1344px;top:1088px;width:144px;"><span>show main</span></div>
<div class="b cG uc" style="left:1488px;top:1088px;width:48px;"><span>YES</span></div>
<div class="b cL l" style="left:1536px;top:1088px;width:96px;"><span>mappings</span></div>
<div class="b cL l" style="left:1632px;top:1088px;width:96px;"><span>groups</span></div>
<div class="b cC" style="left:1728px;top:1088px;width:96px;"><span>origin</span></div>
<div class="b cC" style="left:1824px;top:1088px;width:96px;"><span>object</span></div>
<div class="b cY l" style="left:1344px;top:1112px;width:144px;"><span>show hidden</span></div>
<div class="b cG uc" style="left:1488px;top:1112px;width:48px;"><span>NO</span></div>
<div class="b cLS l" style="left:1536px;top:1112px;width:96px;"><span>n.c.level</span></div>
<div class="b cL l" style="left:1632px;top:1112px;width:96px;"><span>l.r.swap</span></div>
<div class="b cYB" style="left:1728px;top:1112px;width:48px;"><span>blob</span></div>
<div class="b cYB dash" style="left:1776px;top:1112px;width:24px;"><span>–</span></div>
<div class="b cYB plus" style="left:1800px;top:1112px;width:24px;"><span>+</span></div>
<div class="b cYB" style="left:1824px;top:1112px;width:48px;"><span>text</span></div>
<div class="b cYB dash" style="left:1872px;top:1112px;width:24px;"><span>–</span></div>
<div class="b cYB plus" style="left:1896px;top:1112px;width:24px;"><span>+</span></div>
<div class="b cL" style="left:1344px;top:1136px;width:48px;"><span>nrm</span></div>
<div class="b cG2" style="left:1392px;top:1136px;width:48px;"><span>off</span></div>
<div class="b cG" style="left:1440px;top:1136px;width:48px;"><span>sml</span></div>
<div class="b cG" style="left:1488px;top:1136px;width:48px;"><span>big</span></div>
<div class="b cP l" style="left:1536px;top:1136px;width:144px;"><span>wire overlay</span></div>
<div class="b cG uc" style="left:1680px;top:1136px;width:48px;"><span>YES</span></div>
<div class="b cGR" style="left:1728px;top:1136px;width:168px;"><span>reload textures</span></div>
<div class="b cG dash" style="left:1896px;top:1136px;width:24px;"><span>–</span></div>
<div class="sl" style="top:944px;background:#f88878;box-shadow:inset 1px 1px 0 #ffb8ac,inset -1px -1px 0 #b85c50,inset 0 2px 0 #ffb8ac88,inset 0 -2px 0 #b85c5088"><i></i></div>
<div class="ab" style="left:96px;top:944px"><svg width="24" height="18"><polygon points="16.5,4.5 16.5,13.5 7.5,9.0" fill="#000"/></svg></div>
<div class="ab" style="left:120px;top:944px"><svg width="24" height="18"><polygon points="8.0,4.5 8.0,13.5 17.0,9.0" fill="#000"/></svg></div>
<div class="sl" style="top:962px;background:#a0f8a0;box-shadow:inset 1px 1px 0 #d0ffd0,inset -1px -1px 0 #68b068,inset 0 2px 0 #d0ffd088,inset 0 -2px 0 #68b06888"><i></i></div>
<div class="ab" style="left:96px;top:962px"><svg width="24" height="18"><polygon points="16.5,4.5 16.5,13.5 7.5,9.0" fill="#000"/></svg></div>
<div class="ab" style="left:120px;top:962px"><svg width="24" height="18"><polygon points="8.0,4.5 8.0,13.5 17.0,9.0" fill="#000"/></svg></div>
<div class="sl" style="top:980px;background:#a4a4ff;box-shadow:inset 1px 1px 0 #c8c8ff,inset -1px -1px 0 #7070c0,inset 0 2px 0 #c8c8ff88,inset 0 -2px 0 #7070c088"><i></i></div>
<div class="ab" style="left:96px;top:980px"><svg width="24" height="18"><polygon points="16.5,4.5 16.5,13.5 7.5,9.0" fill="#000"/></svg></div>
<div class="ab" style="left:120px;top:980px"><svg width="24" height="18"><polygon points="8.0,4.5 8.0,13.5 17.0,9.0" fill="#000"/></svg></div>
<div class="sl" style="top:998px;background:#999;box-shadow:inset 1px 1px 0 #bdbdbd,inset -1px -1px 0 #6f6f6f,inset 0 2px 0 #bdbdbd88,inset 0 -2px 0 #6f6f6f88"><i></i></div>
<div class="ab" style="left:96px;top:998px"><svg width="24" height="18"><polygon points="16.5,4.5 16.5,13.5 7.5,9.0" fill="#000"/></svg></div>
<div class="ab" style="left:120px;top:998px"><svg width="24" height="18"><polygon points="8.0,4.5 8.0,13.5 17.0,9.0" fill="#000"/></svg></div>
<div class="b cD" style="left:144px;top:944px;width:48px"><span>100</span></div>
<div class="b cD" style="left:144px;top:968px;width:48px"><span>100</span></div>
<div class="b cD" style="left:144px;top:992px;width:48px"><span>100</span></div>
<div id="mbox"><span>unnamed<br>mapping</span></div>
<div class="sb" style="left:252px"><svg width="18" height="18"><polygon points="13.0,5.0 13.0,13.0 5.0,9.0" fill="#000"/></svg></div>
<div class="sb" style="left:270px"><svg width="18" height="18"><polygon points="5.0,5.0 5.0,13.0 13.0,9.0" fill="#000"/></svg></div>
<div id="task">
<svg width="1920" height="40" viewBox="0 0 1920 40">
<defs>
<linearGradient id="sun" x1="0" y1="0" x2="1" y2="1"><stop offset="0" stop-color="#ffb030"/><stop offset="1" stop-color="#f06010"/></linearGradient>
<linearGradient id="fold" x1="0" y1="0" x2="0" y2="1"><stop offset="0" stop-color="#ffd868"/><stop offset="1" stop-color="#f0b020"/></linearGradient>
<linearGradient id="np" x1="0" y1="1" x2="1" y2="0"><stop offset="0" stop-color="#2a8090"/><stop offset=".5" stop-color="#8cc8d4"/><stop offset="1" stop-color="#f0f8fa"/></linearGradient>
</defs>
<rect x="884" y="0" width="48" height="40" fill="#373737"/>
<path d="M15.700 13.400L22.200 12.600V19.600H15.700zM23.100 12.500L32.400 11.300V19.600H23.100zM15.700 20.400H22.200V27.400L15.700 26.500zM23.100 20.400H32.400V28.700L23.100 27.500z" fill="#fff"/>
<g fill="none" stroke="#fff" stroke-width="1.200"><rect x="408.600" y="15.600" width="9.500" height="6.800"/><path d="M407.500 13.500h11.700M407.500 26.500h11.700M422.500 11.500v3M422.500 21v6.500"/></g><rect x="421" y="15" width="3.200" height="4.600" fill="#fff"/>
<rect x="455" y="8" width="24" height="24" rx="3" fill="#0c0a58"/><circle cx="467" cy="20" r="6.200" fill="none" stroke="#fff" stroke-width="2.200"/><circle cx="467.500" cy="19.500" r="1.700" fill="#fff"/><circle cx="472.500" cy="14" r="1.600" fill="#ff3c78"/>
<circle cx="515.500" cy="20" r="12" fill="#fff"/><path d="M510 15.500V21.500a2.700 2.700 0 0 0 5.400 0V17.500M515.400 21.500a2.700 2.700 0 0 0 5.400 0V15.500" fill="none" stroke="#2a9ad8" stroke-width="1.500" stroke-linecap="round"/>
<g transform="translate(565,20)"><path d="M0 0L-10.390 -6A12 12 0 0 1 10.390 -6z" fill="#dd4436"/><path d="M0 0L10.390 -6A12 12 0 0 1 -1.500 11.900L2 2z" fill="#fecd42"/><path d="M0 0L-1.500 11.900A12 12 0 0 1 -10.390 -6L-3 0z" fill="#1ca261"/><path d="M-10.390 -6L-3.500 4L0 0zM10.390 -6L0 -5.600v5.600z" fill="#dd4436"/><path d="M-3.500 4L-1.500 11.900L3 3z" fill="#1ca261"/><path d="M10.390 -6H0L4 3z" fill="#fecd42"/><circle r="5.700" fill="#fff"/><circle r="4.500" fill="#4486f4"/></g>
<path d="M602 19l18-7 6 5-17 9z" fill="#454545"/><path d="M602 19l7 7v1.500l-7-7z" fill="#2a2a2a"/><path d="M609 26l17-9v1.500l-17 9z" fill="#333"/>
<rect x="652.500" y="9.500" width="20" height="19" fill="#0a1c2c" stroke="#30c4f0" stroke-width="1.400"/><text x="662.500" y="24" text-anchor="middle" font-family="Liberation Sans, sans-serif" font-size="12.500" fill="#30c4f0" textLength="12.500" lengthAdjust="spacingAndGlyphs">Ps</text>
<rect x="703" y="8" width="17" height="24" rx="1.500" fill="#7a8490"/><rect x="705" y="10" width="13" height="5" fill="#58c0f0"/>
<rect x="705.0" y="17.0" width="3.600" height="3.600" fill="#d8dce0"/>
<rect x="709.6" y="17.0" width="3.600" height="3.600" fill="#d8dce0"/>
<rect x="714.2" y="17.0" width="3.600" height="3.600" fill="#d8dce0"/>
<rect x="705.0" y="21.6" width="3.600" height="3.600" fill="#d8dce0"/>
<rect x="709.6" y="21.6" width="3.600" height="3.600" fill="#d8dce0"/>
<rect x="705.0" y="26.2" width="3.600" height="3.600" fill="#d8dce0"/>
<rect x="709.6" y="26.2" width="3.600" height="3.600" fill="#d8dce0"/>
<rect x="714.200" y="21.600" width="3.600" height="8.200" fill="#1c4e8c"/>
<path d="M749 11h8l2 2.500h12V29h-22z" fill="#f0b428"/><rect x="749" y="15" width="22" height="14" fill="url(#fold)"/><path d="M754 22h12v7h-12z" fill="#3c90dc"/><path d="M756.500 25h7v4h-7z" fill="#bfe0fa"/>
<polygon points="803.8,8.8 816.2,8.8 818.4,10.9 820.3,13.8 819.1,17.5 818.8,21.9 815.9,26.9 810.0,32.2 804.1,26.9 801.2,21.9 800.9,17.5 799.7,13.8 801.6,10.9" fill="#f0481f"/>
<polygon points="805.3,13.8 810.0,12.8 814.7,13.8 816.9,18.4 815.0,23.4 810.0,27.2 805.0,23.4 803.1,18.4" fill="#fff"/>
<polygon points="805.9,16.9 808.4,17.5 807.8,18.8" fill="#f0481f"/><polygon points="814.1,16.9 811.6,17.5 812.2,18.8" fill="#f0481f"/>
<polygon points="808.8,20.9 811.2,20.9 810.6,23.4 810.0,24.7 809.4,23.4" fill="#f0481f"/><polygon points="808.1,15.0 810.0,16.2 811.9,15.0 810.0,14.4" fill="#f8a088"/>
<polygon points="847.2,24.1 855.9,9.1 869.1,12.5 868.1,29.1 858.8,27.8" fill="url(#np)"/>
<polygon points="855.9,9.1 869.1,12.5 868.8,14.4 855.0,10.9" fill="#d8eef4"/>
<polygon points="847.2,24.1 858.8,27.8 868.1,29.1 867.5,30.0 858.1,29.1 846.9,25.0" fill="#2c6c7c"/>
<rect x="896.300" y="8.500" width="23.200" height="23" rx="4.500" fill="#151517" stroke="#5a5a5a" stroke-width=".9"/>
<path d="M909.4 13.1L901.2 21.2L909.4 21.2" fill="none" stroke="#f0c828" stroke-width="2.400"/>
<path d="M917.5 17.5L910.0 17.5L907.2 22.2L915.0 22.2L912.2 27.5L904.4 27.5" fill="none" stroke="#38a8f0" stroke-width="2.200"/>
<path d="M913.4 12.5L908.1 18.4" stroke="#f4f4f4" stroke-width="1.500"/><path d="M915.0 13.1L911.9 13.1M913.1 15.6L910.6 15.6" stroke="#f4f4f4" stroke-width="1.200"/>
<path d="M946 22c0-6 5-9.500 11-9.500 5 0 8.500 3 8.500 7 0 3-2.500 4-4.500 4-1.500 0-2 .8-1.500 2 .7 1.700-.5 4-4.500 4-5 0-9-3-9-7.500z" fill="#e4ecf4" stroke="#8a98a8" stroke-width=".6"/><circle cx="951" cy="21" r="1.800" fill="#e83030"/><circle cx="954.500" cy="16.500" r="1.800" fill="#f0c020"/><circle cx="960" cy="16" r="1.800" fill="#30a840"/><circle cx="953" cy="26" r="1.800" fill="#3070e0"/><path d="M957 30l8.500-19 2 1-8.500 19z" fill="#d89040"/><path d="M965.500 11l1.500-3.500 1.500 1-1 3.500z" fill="#e8a050"/>
<rect x="741" y="38" width="40" height="2" fill="#8fa4b8"/>
<rect x="790" y="38" width="39" height="2" fill="#8fa4b8"/>
<rect x="884" y="38" width="48" height="2" fill="#8fa4b8"/>
<rect x="937.5" y="38" width="39.0" height="2" fill="#8fa4b8"/>
<circle cx="1560.500" cy="20" r="10.500" fill="url(#sun)"/>
<path d="M1680 23.500l5.500-5.500 5.500 5.500" fill="none" stroke="#fff" stroke-width="1.200"/>
<path d="M1702.500 17.500h2.500l3.500-3.500v12l-3.500-3.500h-2.500z" fill="none" stroke="#fff" stroke-width="1"/><path d="M1711 17.500a3.500 3.500 0 0 1 0 5M1713.200 15.300a6.500 6.500 0 0 1 0 9.400M1715.400 13.200a9.500 9.500 0 0 1 0 13.600" fill="none" stroke="#fff" stroke-width="1"/>
<rect x="1726.500" y="14.500" width="21" height="11" rx="1" fill="none" stroke="#fff" stroke-width="1"/><path d="M1729 17.500h16M1729 20h16" stroke="#fff" stroke-width="1" stroke-dasharray="1.200 1.300"/><path d="M1731 22.700h12" stroke="#fff" stroke-width="1"/>
<path d="M1879.500 11.500h15v11h-8l-3.500 3.500v-3.500h-3.500z" fill="#fff"/><path d="M1882 14.500h10M1882 17h10M1882 19.500h7" stroke="#101010" stroke-width="1"/><circle cx="1894" cy="27" r="7.500" fill="#3a3a3a" stroke="#8a8a8a" stroke-width="1"/><text x="1894" y="31" text-anchor="middle" font-family="Liberation Sans, sans-serif" font-size="11" font-weight="bold" fill="#fff">1</text>
<rect x="1914.500" y="0" width="1" height="40" fill="#5a5a5a"/>
</svg>
<div id="srch"><svg width="344" height="40" viewBox="0 1 344 40" style="top:0">
<circle cx="22.600" cy="17.300" r="5.200" fill="none" stroke="#222" stroke-width="1.100"/><path d="M18.900 21.100l-6.800 7" stroke="#222" stroke-width="1.200"/>
<defs><linearGradient id="wat" x1="0" y1="0" x2="1" y2="0"><stop offset="0" stop-color="#a8e4f8"/><stop offset=".45" stop-color="#66c4ea"/><stop offset="1" stop-color="#58bce8"/></linearGradient>
<linearGradient id="lf" x1="0" y1="0" x2="1" y2="0"><stop offset="0" stop-color="#8ed43c"/><stop offset=".55" stop-color="#6cc844"/><stop offset="1" stop-color="#1a9a44"/></linearGradient></defs>
<path d="M262 40Q290 31 318 29.500T344 28V40z" fill="url(#wat)"/>
<g fill="none" stroke="#8a5424" stroke-linecap="round">
<path d="M310 13Q308 19 309 25" stroke-width="2.800" stroke="#a86a30"/>
<path d="M293.500 13Q298 19 307.500 21" stroke-width="1.600" stroke="#a86a30"/>
<path d="M310 17.500Q314 15.500 322 15.500" stroke-width="1.500" stroke="#8a6a50"/>
<path d="M309 24Q290 27 287 40M309 25Q298 30 296 40M309 25V40M310 25Q315 30 315 40M310 24Q328 28 330.500 40" stroke-width="1.700"/>
<path d="M287.500 37Q295 33 300 40M319.500 40Q324 31 329 36" stroke-width="1.500"/>
</g>
<ellipse cx="293" cy="10.800" rx="10" ry="5" fill="url(#lf)"/><circle cx="287" cy="12.500" r="3.200" fill="#84d038"/><circle cx="299" cy="10" r="4.600" fill="#1e9c46"/><circle cx="294" cy="8" r="3.500" fill="#58c048"/>
<ellipse cx="326.500" cy="10.500" rx="7.500" ry="5.800" fill="#22a048"/><circle cx="323" cy="6" r="3.200" fill="#44b44a"/>
<ellipse cx="312.500" cy="7.500" rx="10.500" ry="6" fill="#84d448"/><circle cx="311" cy="3.500" r="3.500" fill="#9cdc6c"/><circle cx="317.500" cy="7" r="4.500" fill="#78cc44"/>
</svg><span>Type here to search</span></div>
<div class="tt lft" style="left:1581px;top:11px;font-size:15px;line-height:18px;letter-spacing:-.1px">83°F&nbsp;&nbsp;Sunny</div>
<div class="tt lft" style="left:1760px;top:13px;">ENG</div>
<div class="tt" style="left:1788px;width:80px;top:4px;">22:36</div>
<div class="tt" style="left:1783px;width:90px;top:22px;">26.07.2023 г.</div>
</div>
</body></html>
